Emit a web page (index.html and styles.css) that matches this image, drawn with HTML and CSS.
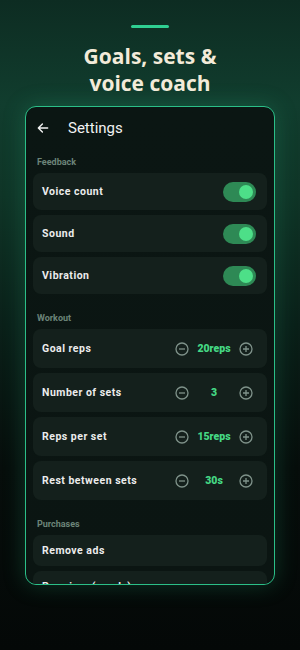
FILE: index.html
```html
<!DOCTYPE html>
<html lang="en">
<head>
    <meta charset="UTF-8">
    <meta name="viewport" content="width=device-width, initial-scale=1">
    <title>Settings</title>
    <link rel="stylesheet" href="styles.css">
</head>
<body>
    <div class="bar"></div>
    <h1 class="title">Goals, sets &amp;<br>voice coach</h1>

    <section class="card">
        <header class="head">
            <svg class="back" width="14" height="14" viewBox="0 0 24 24">
                <path d="M20 12H5M11 5l-7 7 7 7" fill="none" stroke="#f2f2f2" stroke-width="2.4" stroke-linecap="round" stroke-linejoin="round"/>
            </svg>
            <span>Settings</span>
        </header>

        <div class="label first">Feedback</div>
        <div class="list">
            <div class="row">
                <span>Voice count</span>
                <div class="toggle"><i></i></div>
            </div>
            <div class="row">
                <span>Sound</span>
                <div class="toggle"><i></i></div>
            </div>
            <div class="row">
                <span>Vibration</span>
                <div class="toggle"><i></i></div>
            </div>
        </div>

        <div class="label">Workout</div>
        <div class="list">
            <div class="row tall">
                <span>Goal reps</span>
                <div class="stepper">
                    <svg width="14" height="14" viewBox="0 0 14 14"><circle cx="7" cy="7" r="6" fill="none" stroke="#7f928a" stroke-width="1.3"/><path d="M4 7h6" stroke="#7f928a" stroke-width="1.3"/></svg>
                    <b>20reps</b>
                    <svg width="14" height="14" viewBox="0 0 14 14"><circle cx="7" cy="7" r="6" fill="none" stroke="#7f928a" stroke-width="1.3"/><path d="M4 7h6M7 4v6" stroke="#7f928a" stroke-width="1.3"/></svg>
                </div>
            </div>
            <div class="row tall">
                <span>Number of sets</span>
                <div class="stepper">
                    <svg width="14" height="14" viewBox="0 0 14 14"><circle cx="7" cy="7" r="6" fill="none" stroke="#7f928a" stroke-width="1.3"/><path d="M4 7h6" stroke="#7f928a" stroke-width="1.3"/></svg>
                    <b>3</b>
                    <svg width="14" height="14" viewBox="0 0 14 14"><circle cx="7" cy="7" r="6" fill="none" stroke="#7f928a" stroke-width="1.3"/><path d="M4 7h6M7 4v6" stroke="#7f928a" stroke-width="1.3"/></svg>
                </div>
            </div>
            <div class="row tall">
                <span>Reps per set</span>
                <div class="stepper">
                    <svg width="14" height="14" viewBox="0 0 14 14"><circle cx="7" cy="7" r="6" fill="none" stroke="#7f928a" stroke-width="1.3"/><path d="M4 7h6" stroke="#7f928a" stroke-width="1.3"/></svg>
                    <b>15reps</b>
                    <svg width="14" height="14" viewBox="0 0 14 14"><circle cx="7" cy="7" r="6" fill="none" stroke="#7f928a" stroke-width="1.3"/><path d="M4 7h6M7 4v6" stroke="#7f928a" stroke-width="1.3"/></svg>
                </div>
            </div>
            <div class="row tall">
                <span>Rest between sets</span>
                <div class="stepper">
                    <svg width="14" height="14" viewBox="0 0 14 14"><circle cx="7" cy="7" r="6" fill="none" stroke="#7f928a" stroke-width="1.3"/><path d="M4 7h6" stroke="#7f928a" stroke-width="1.3"/></svg>
                    <b>30s</b>
                    <svg width="14" height="14" viewBox="0 0 14 14"><circle cx="7" cy="7" r="6" fill="none" stroke="#7f928a" stroke-width="1.3"/><path d="M4 7h6M7 4v6" stroke="#7f928a" stroke-width="1.3"/></svg>
                </div>
            </div>
        </div>

        <div class="label">Purchases</div>
        <div class="list">
            <div class="row short"><span>Remove ads</span></div>
            <div class="row short"><span>Premium (yearly)</span></div>
        </div>
    </section>
</body>
</html>
```

FILE: styles.css
```css
* {
    margin: 0;
    padding: 0;
    box-sizing: border-box;
}

html {
    font-family: Roboto, "Noto Sans", sans-serif;
}

body {
    width: 300px;
    height: 650px;
    overflow: hidden;
    padding-top: 25px;
    background: linear-gradient(180deg, #0d2c22 0%, #113d2e 16%, #0f3527 30%, #0a2019 50%, #060d0b 72%, #040807 100%);
}

.bar {
    width: 38px;
    height: 3px;
    margin: 0 auto;
    border-radius: 2px;
    background-color: #2fcf92;
}

.title {
    margin-top: 15px;
    font-family: "Open Sans", sans-serif;
    font-size: 21px;
    line-height: 27px;
    font-weight: 700;
    color: #f3ebd9;
    text-align: center;
}

.card {
    width: 250px;
    height: 479px;
    margin: 9px auto 0;
    padding: 0 7px;
    overflow: hidden;
    border: 1.5px solid #2bbf88;
    border-radius: 11px;
    background: linear-gradient(180deg, #0b1613 0%, #0b1512 100%);
    box-shadow: 0 0 22px rgba(40, 170, 115, 0.28);
}

.head {
    display: flex;
    align-items: center;
    height: 42px;
    padding-left: 3px;
    color: #f2f2f2;
    font-size: 15px;
}

.head .back {
    margin-right: 18px;
}

.label {
    padding: 19px 4px 5px;
    font-size: 9px;
    line-height: 11px;
    font-weight: 700;
    color: #6b8479;
}

.label.first {
    padding-top: 8px;
}

.list {
    display: flex;
    flex-direction: column;
    gap: 5px;
}

.row {
    display: flex;
    align-items: center;
    justify-content: space-between;
    height: 37px;
    padding: 0 11px 0 9px;
    border-radius: 8px;
    background-color: #14201c;
    color: #ececec;
    font-size: 10.5px;
    font-weight: 700;
    letter-spacing: 0.5px;
}

.row.tall {
    height: 39px;
    padding-right: 14px;
}

.row.short {
    height: 31px;
}

.toggle {
    display: flex;
    justify-content: flex-end;
    align-items: center;
    width: 33px;
    height: 20px;
    padding: 3px;
    border-radius: 10px;
    background-color: #2e8955;
}

.toggle i {
    width: 14px;
    height: 14px;
    border-radius: 50%;
    background-color: #4ddf88;
}

.stepper {
    display: flex;
    align-items: center;
}

.stepper b {
    width: 50px;
    text-align: center;
    color: #45d884;
    font-size: 10.5px;
    letter-spacing: 0;
}
```
